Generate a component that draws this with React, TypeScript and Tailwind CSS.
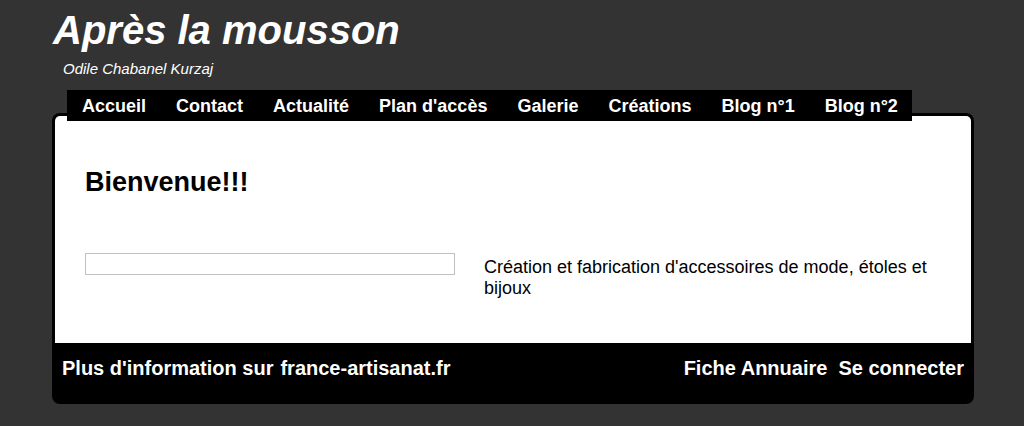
export default function App() {
  const nav = ["Accueil", "Contact", "Actualité", "Plan d'accès", "Galerie", "Créations", "Blog n°1", "Blog n°2"];
  return (
    <div className="min-h-[426px] w-full bg-[#333333] font-['Liberation_Sans',Arial,sans-serif] text-white">
      <div className="w-[922px] ml-[52px] pt-[7px]">
        <h1 className="ml-[1px] text-[40px] leading-[46px] font-bold italic">Après la mousson</h1>
        <div className="ml-[11px] mt-[7px] text-[15px] leading-[17px] italic">Odile Chabanel Kurzaj</div>
        <nav className="relative z-10 ml-[15px] mt-[13px] flex h-[31px] w-fit items-start bg-black pl-[15px] pr-[14px] pt-[6px]">
          {nav.map((n, i) => (
            <span key={n} className={"text-[18px] leading-[21px] font-bold whitespace-nowrap " + (i > 0 ? "ml-[30px]" : "")}>
              {n}
            </span>
          ))}
        </nav>
        <div className="-mt-[8px] rounded-[8px] bg-black px-[3px] pt-[3px]">
          <div className="rounded-t-[5px] bg-white px-[30px] pt-[51px] pb-[44px] text-black">
            <h2 className="text-[27px] leading-[31px] font-bold">Bienvenue!!!</h2>
            <div className="mt-[55px] flex items-start">
              <input className="h-[22px] w-[370px] shrink-0 border border-[#c0c0c0] bg-white outline-none" />
              <p className="ml-[29px] mt-[4px] text-[18px] leading-[21px]">
                Création et fabrication d'accessoires de mode, étoles et bijoux
              </p>
            </div>
          </div>
          <div className="flex h-[61px] items-start justify-between px-[7px] pt-[14px] text-[20px] leading-[23px] font-bold text-white">
            <div className="flex gap-[7px]">
              <span>Plus d'information sur</span>
              <span>france-artisanat.fr</span>
            </div>
            <div className="flex gap-[11px]">
              <span>Fiche Annuaire</span>
              <span>Se connecter</span>
            </div>
          </div>
        </div>
      </div>
    </div>
  );
}
